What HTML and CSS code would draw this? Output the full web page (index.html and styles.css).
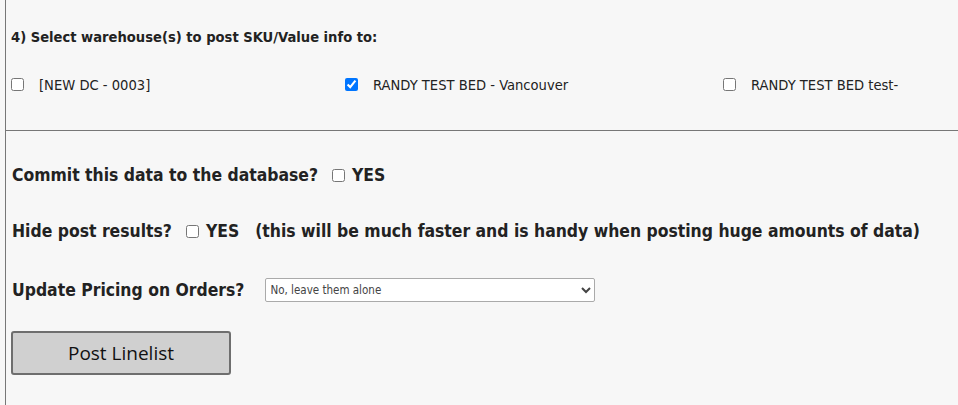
FILE: index.html
```html
<!DOCTYPE html>
<html lang="en">
<head>
  <meta charset="UTF-8">
  <title>Post Linelist</title>
  <link rel="stylesheet" href="styles.css">
</head>
<body>
  <div class="page">
    <div class="warehouses">
      <h4 class="step">4) Select warehouse(s) to post SKU/Value info to:</h4>
      <div class="wh-list">
        <label class="wh"><input type="checkbox"> <span>[NEW DC - 0003]</span></label>
        <label class="wh"><input type="checkbox" checked> <span>RANDY TEST BED - Vancouver</span></label>
        <label class="wh"><input type="checkbox"> <span>RANDY TEST BED test-</span></label>
      </div>
    </div>
    <form class="options">
      <div class="row commit">
        Commit this data to the database?
        <label class="yes"><input type="checkbox"> YES</label>
      </div>
      <div class="row hide">
        Hide post results?
        <label class="yes"><input type="checkbox"> YES</label>
        <span class="note">(this will be much faster and is handy when posting huge amounts of data)</span>
      </div>
      <div class="row update">
        Update Pricing on Orders?
        <select class="pricing">
          <option>No, leave them alone</option>
          <option>Yes, update pricing</option>
        </select>
      </div>
      <button type="button" class="post-btn">Post Linelist</button>
    </form>
  </div>
</body>
</html>
```

FILE: styles.css
```css
body { margin: 0; background: #f7f7f7; color: #222; font-family: "DejaVu Sans Condensed", "DejaVu Sans", sans-serif; }
.page { margin-left: 5px; border-left: 1px solid #777; min-height: 405px; }

.warehouses { border-bottom: 1px solid #777; padding: 27px 0 36px 5px; }
.step { margin: 0; height: 20px; line-height: 20px; font-size: 14.6px; font-weight: bold; }
.wh-list { display: grid; grid-template-columns: 334px 378px 1fr; margin-top: 27px; }
.wh { display: flex; align-items: center; height: 20px; font-size: 14.6px; }
.wh input { margin: 0 15px 0 0; width: 13px; height: 13px; }

.options { padding: 32px 0 0 6px; font-size: 17.4px; font-weight: bold; }
.row { display: flex; align-items: center; height: 24px; margin-bottom: 32px; white-space: nowrap; }
.row.hide { margin-bottom: 35px; }
.yes { display: flex; align-items: center; margin-left: 14px; }
.yes input { margin: 0 7px 0 0; width: 13px; height: 13px; }
.note { margin-left: 16px; }
.row.update { margin-bottom: 29px; }
.pricing {
  margin-left: 21px; width: 330px; height: 24px; font-family: "DejaVu Sans Condensed", sans-serif;
  font-size: 11.5px; color: #444; background: #fff; border: 1px solid #aaa; border-radius: 2px;
}
.post-btn {
  margin-left: -1px; width: 220px; height: 44px; font-family: "Open Sans", sans-serif; font-size: 19px; color: #111;
  background: #d0d0d0; border: 2px solid #6e6e6e; border-radius: 3px; cursor: pointer;
}
.post-btn:hover { background: #c6c6c6; }
```
